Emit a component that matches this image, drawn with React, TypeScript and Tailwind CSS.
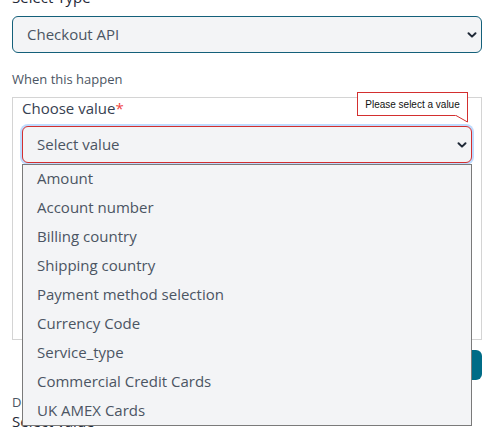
import React from 'react';

const options = [
    'Amount',
    'Account number',
    'Billing country',
    'Shipping country',
    'Payment method selection',
    'Currency Code',
    'Service_type',
    'Commercial Credit Cards',
    'UK AMEX Cards',
];

const Chevron: React.FC = () => (
    <svg width="12" height="12" viewBox="0 0 12 12" className="shrink-0">
        <path d="M2.5 4.2 L6 7.6 L9.5 4.2" fill="none" stroke="#1f2937" strokeWidth="2" strokeLinecap="round" strokeLinejoin="round" />
    </svg>
);

export default function App() {
    return (
        <div className="relative w-[487px] h-[430px] overflow-hidden bg-white font-['Open_Sans',sans-serif]">
            <div className="pl-3 pr-[5px] -mt-[13px]">
                <div className="text-[15px] leading-[20px] text-[#1f2937]">Select Type</div>
                <div className="mt-[9px] h-[37px] rounded-[6px] border border-[#14607a] bg-[#f3f4f6] flex items-center justify-between pl-[14px] pr-[3px]">
                    <span className="text-[15px] text-[#4b5563]">Checkout API</span>
                    <Chevron />
                </div>
                <div className="mt-[17px] text-[13px] leading-[18px] text-[#4b5563]">When this happen</div>
                <div className="mt-[9px] h-[243px] border border-[#d4d4d4] px-[9px] pt-0">
                    <div className="text-[15px] leading-[20px] text-[#374151]">
                        Choose value<span className="text-[#ef4444]">*</span>
                    </div>
                    <div className="mt-[8px] h-[37px] rounded-[6px] border border-[#d32f2f] ring-2 ring-[#bfdbfe] bg-[#f3f4f6] flex items-center justify-between pl-[14px] pr-[3px]">
                        <span className="text-[15px] text-[#4b5563]">Select value</span>
                        <Chevron />
                    </div>
                </div>
                <div className="flex justify-end mt-[10px]">
                    <div className="w-[90px] h-[30px] rounded-[6px] bg-[#006c87]" />
                </div>
                <div className="mt-[13px] text-[13px] leading-[18px] text-[#4b5563]">Default value</div>
                <div className="text-[15px] leading-[20px] text-[#1f2937]">Select value</div>
            </div>

            <div className="absolute left-[22px] top-[164px] w-[450px] h-[262px] border border-[#7a7a7a] bg-[#f3f4f6]">
                {options.map((o) => (
                    <div key={o} className="h-[29px] flex items-center pl-[14px] pb-[2px] text-[15px] text-[#4b5563]">
                        {o}
                    </div>
                ))}
            </div>

            <div className="absolute left-[357px] top-[92px] w-[111px] h-[24px] bg-white border border-[#d32f2f] flex items-center justify-center text-[10px] text-[#111] font-['Liberation_Sans',sans-serif]">
                Please select a value
            </div>
            <svg className="absolute left-[455px] top-[114px]" width="14" height="10" viewBox="0 0 14 10">
                <path d="M0 1 L12.5 1 L12.5 8 Z" fill="white" />
                <path d="M1 1.5 L12.5 8 L12.5 0" fill="none" stroke="#d32f2f" strokeWidth="1" />
            </svg>
        </div>
    );
}
